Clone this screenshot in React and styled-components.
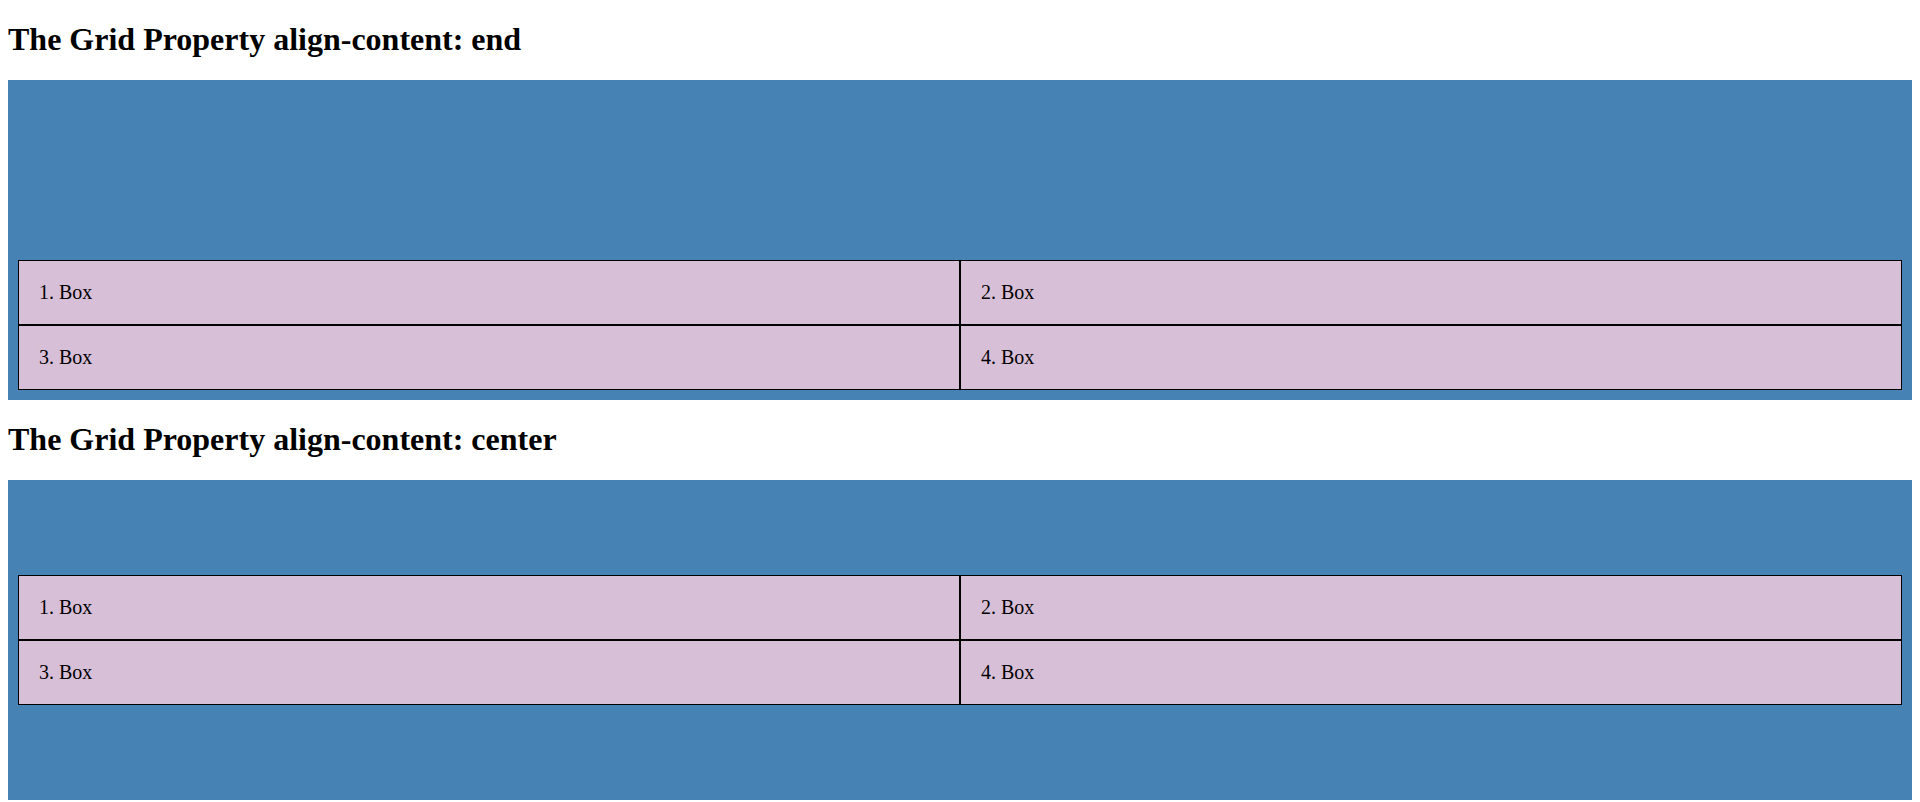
import React from 'react';
import styled, { createGlobalStyle } from 'styled-components';

const GlobalStyle = createGlobalStyle`
body {
    margin: 0 8px 8px;
    background: #ffffff;
    font-family: "Liberation Serif", "Times New Roman", serif;
    color: #000000;
}
`;

const Heading = styled.h1`
font-size: 32px;
font-weight: bold;
margin: 0.67em 0;
line-height: normal;
`;

const GridContainer = styled.div`
display: grid;
height: 300px;
padding: 10px;
grid-template-columns: auto auto;
align-content: ${props => props.align};
background-color: #4682b4;
`;

const GridItem = styled.div`
background-color: #d8bfd8;
border: 1px solid #000000;
padding: 20px;
font-size: 20px;
line-height: normal;
text-align: left;
`;

const boxes = ['1. Box', '2. Box', '3. Box', '4. Box'];

function GridDemo({ align }) {
    return (
        <>
            <Heading>The Grid Property align-content: {align}</Heading>
            <GridContainer align={align}>
                {boxes.map(label => (
                    <GridItem key={label}>{label}</GridItem>
                ))}
            </GridContainer>
        </>
    );
}

export default function App() {
    return (
        <>
            <GlobalStyle />
            <GridDemo align="end" />
            <GridDemo align="center" />
        </>
    );
}
